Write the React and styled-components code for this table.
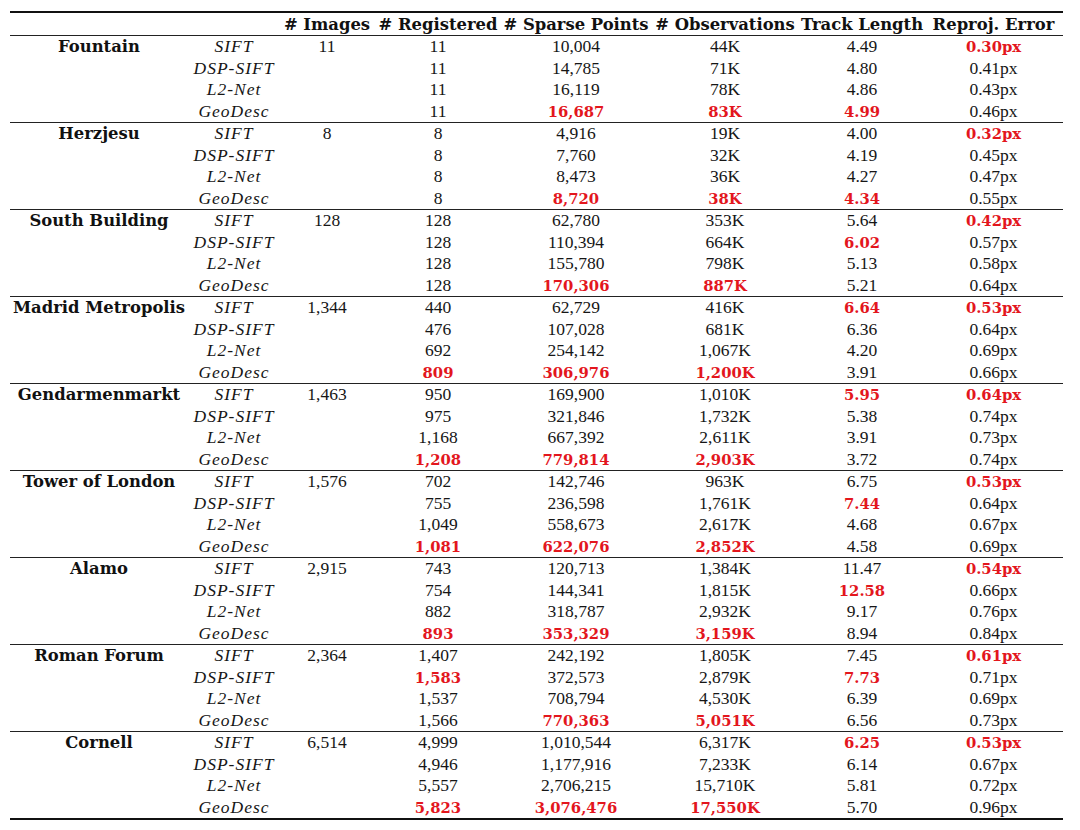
import React from 'react';
import styled, { createGlobalStyle } from 'styled-components';

const GlobalStyle = createGlobalStyle`
  html, body {
    margin: 0;
    padding: 0;
    background: #ffffff;
  }
  body {
    font-family: "Liberation Serif", "Times New Roman", serif;
    color: #161616;
  }
`;

const COLS = '178px 92px 94px 128px 148px 150px 124px 139px';

const Page = styled.div`
  padding: 11px 17px 0 10px;
  width: 1053px;
`;

const Table = styled.div`
  border-top: 2px solid #111;
  border-bottom: 2px solid #111;
`;

const HeaderRow = styled.div`
  display: grid;
  grid-template-columns: ${COLS};
  height: 22px;
  align-items: center;
  border-bottom: 1px solid #222;
`;

const HeadCell = styled.div`
  font-family: "DejaVu Serif", serif;
  font-weight: bold;
  font-size: 16.4px;
  text-align: center;
  white-space: nowrap;
  color: #111;
`;

const Group = styled.div`
  & + & {
    border-top: 1px solid #222;
  }
`;

const Row = styled.div`
  display: grid;
  grid-template-columns: ${COLS};
  height: 21.5px;
  align-items: center;
`;

const Cell = styled.div`
  text-align: center;
  white-space: nowrap;
  font-size: 17.5px;
  line-height: 21.5px;
  color: ${p => (p.$best ? '#e3161d' : '#161616')};
  font-family: ${p => (p.$best ? '"DejaVu Serif", serif' : '"Liberation Serif", serif')};
  font-weight: ${p => (p.$best ? 'bold' : 'normal')};
  ${p => p.$best && 'font-size: 14.8px;'}
`;

const NameCell = styled.div`
  text-align: center;
  white-space: nowrap;
  font-family: "DejaVu Serif", serif;
  font-weight: bold;
  font-size: 16.4px;
  color: #111;
`;

const MethodCell = styled.div`
  text-align: center;
  white-space: nowrap;
  font-style: italic;
  font-size: 17.5px;
  letter-spacing: 1px;
  color: #161616;
`;

const headers = ['', '', '# Images', '# Registered', '# Sparse Points', '# Observations', 'Track Length', 'Reproj. Error'];
const methods = ['SIFT', 'DSP-SIFT', 'L2-Net', 'GeoDesc'];

// values prefixed with * are the best in their block (bold red)
const datasets = [
  { name: 'Fountain', images: '11', rows: [
    ['11', '10,004', '44K', '4.49', '*0.30px'],
    ['11', '14,785', '71K', '4.80', '0.41px'],
    ['11', '16,119', '78K', '4.86', '0.43px'],
    ['11', '*16,687', '*83K', '*4.99', '0.46px'],
  ] },
  { name: 'Herzjesu', images: '8', rows: [
    ['8', '4,916', '19K', '4.00', '*0.32px'],
    ['8', '7,760', '32K', '4.19', '0.45px'],
    ['8', '8,473', '36K', '4.27', '0.47px'],
    ['8', '*8,720', '*38K', '*4.34', '0.55px'],
  ] },
  { name: 'South Building', images: '128', rows: [
    ['128', '62,780', '353K', '5.64', '*0.42px'],
    ['128', '110,394', '664K', '*6.02', '0.57px'],
    ['128', '155,780', '798K', '5.13', '0.58px'],
    ['128', '*170,306', '*887K', '5.21', '0.64px'],
  ] },
  { name: 'Madrid Metropolis', images: '1,344', rows: [
    ['440', '62,729', '416K', '*6.64', '*0.53px'],
    ['476', '107,028', '681K', '6.36', '0.64px'],
    ['692', '254,142', '1,067K', '4.20', '0.69px'],
    ['*809', '*306,976', '*1,200K', '3.91', '0.66px'],
  ] },
  { name: 'Gendarmenmarkt', images: '1,463', rows: [
    ['950', '169,900', '1,010K', '*5.95', '*0.64px'],
    ['975', '321,846', '1,732K', '5.38', '0.74px'],
    ['1,168', '667,392', '2,611K', '3.91', '0.73px'],
    ['*1,208', '*779,814', '*2,903K', '3.72', '0.74px'],
  ] },
  { name: 'Tower of London', images: '1,576', rows: [
    ['702', '142,746', '963K', '6.75', '*0.53px'],
    ['755', '236,598', '1,761K', '*7.44', '0.64px'],
    ['1,049', '558,673', '2,617K', '4.68', '0.67px'],
    ['*1,081', '*622,076', '*2,852K', '4.58', '0.69px'],
  ] },
  { name: 'Alamo', images: '2,915', rows: [
    ['743', '120,713', '1,384K', '11.47', '*0.54px'],
    ['754', '144,341', '1,815K', '*12.58', '0.66px'],
    ['882', '318,787', '2,932K', '9.17', '0.76px'],
    ['*893', '*353,329', '*3,159K', '8.94', '0.84px'],
  ] },
  { name: 'Roman Forum', images: '2,364', rows: [
    ['1,407', '242,192', '1,805K', '7.45', '*0.61px'],
    ['*1,583', '372,573', '2,879K', '*7.73', '0.71px'],
    ['1,537', '708,794', '4,530K', '6.39', '0.69px'],
    ['1,566', '*770,363', '*5,051K', '6.56', '0.73px'],
  ] },
  { name: 'Cornell', images: '6,514', rows: [
    ['4,999', '1,010,544', '6,317K', '*6.25', '*0.53px'],
    ['4,946', '1,177,916', '7,233K', '6.14', '0.67px'],
    ['5,557', '2,706,215', '15,710K', '5.81', '0.72px'],
    ['*5,823', '*3,076,476', '*17,550K', '5.70', '0.96px'],
  ] },
];

const Value = ({ v }) => {
  const best = v.startsWith('*');
  return <Cell $best={best}>{best ? v.slice(1) : v}</Cell>;
};

export default function App() {
  return (
    <Page>
      <GlobalStyle />
      <Table>
        <HeaderRow>
          {headers.map((h, i) => (
            <HeadCell key={i}>{h}</HeadCell>
          ))}
        </HeaderRow>
        {datasets.map(d => (
          <Group key={d.name}>
            {d.rows.map((r, i) => (
              <Row key={i}>
                <NameCell>{i === 0 ? d.name : ''}</NameCell>
                <MethodCell>{methods[i]}</MethodCell>
                <Cell>{i === 0 ? d.images : ''}</Cell>
                {r.map((v, j) => (
                  <Value key={j} v={v} />
                ))}
              </Row>
            ))}
          </Group>
        ))}
      </Table>
    </Page>
  );
}
